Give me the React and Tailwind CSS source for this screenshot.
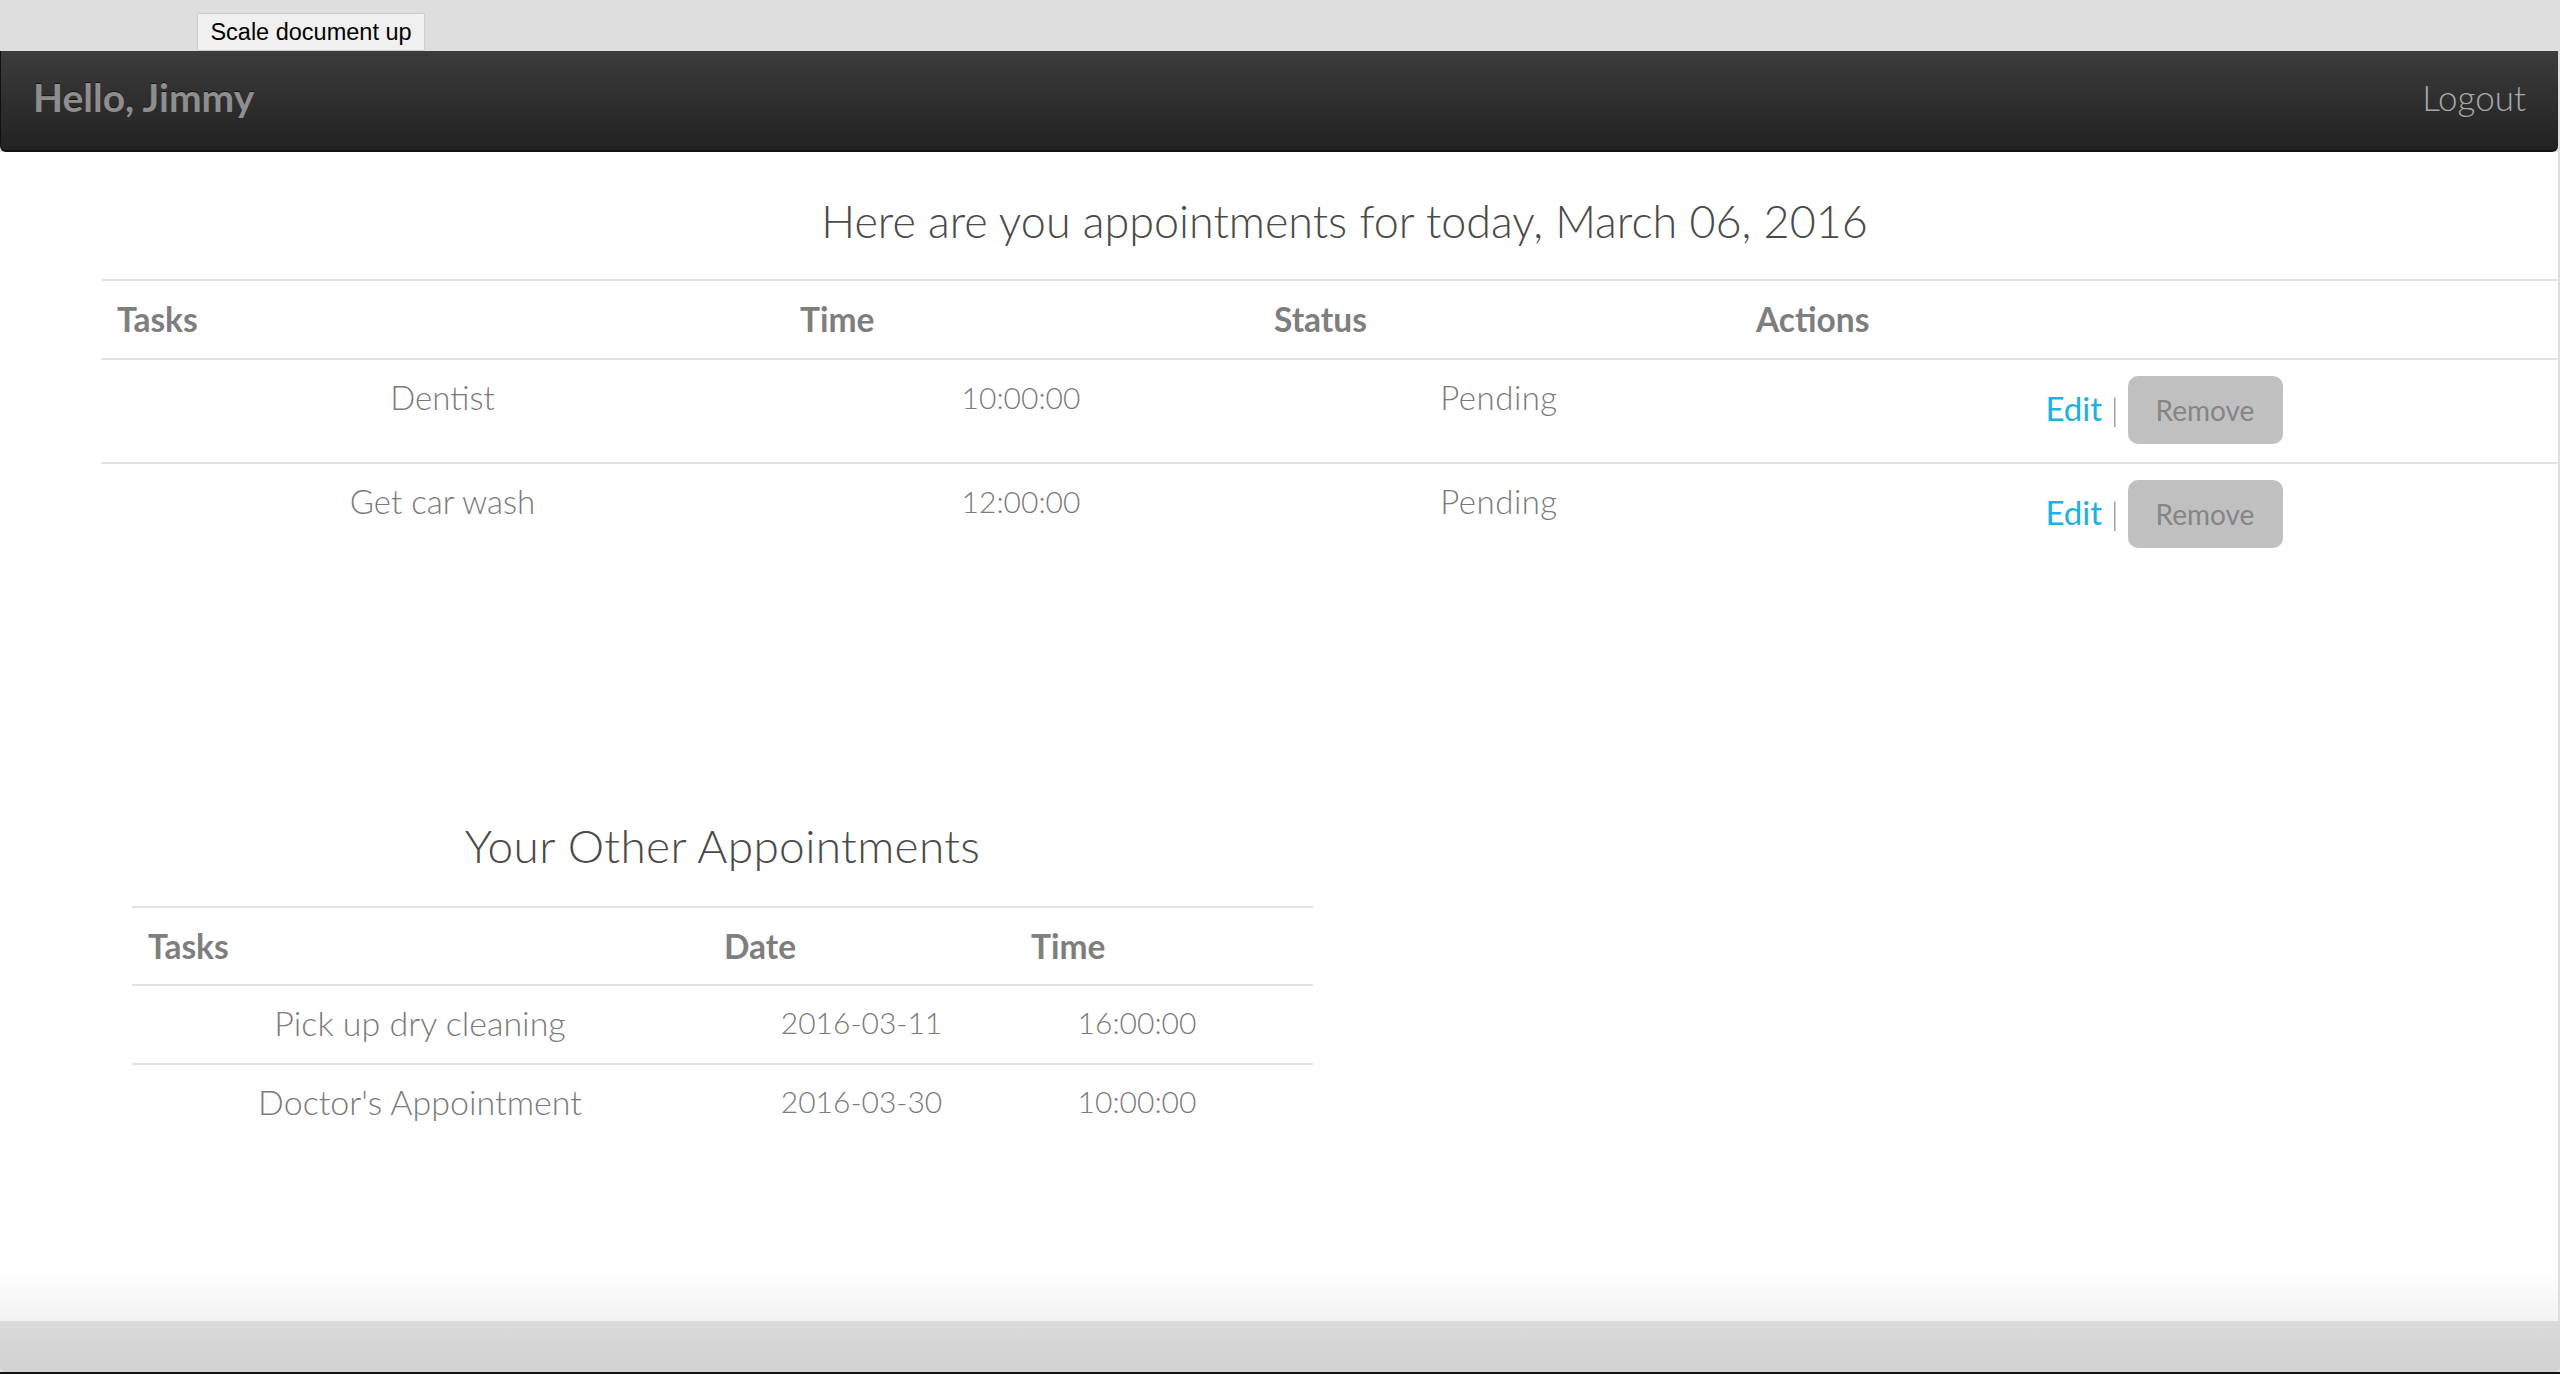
import React from "react";

const today = [
  { task: "Dentist", time: "10:00:00", status: "Pending" },
  { task: "Get car wash", time: "12:00:00", status: "Pending" },
];

const other = [
  { task: "Pick up dry cleaning", date: "2016-03-11", time: "16:00:00" },
  { task: "Doctor's Appointment", date: "2016-03-30", time: "10:00:00" },
];

function App() {
  return (
    <div className="w-[2560px] h-[1374px] overflow-hidden bg-[#dedede] flex flex-col font-['Lato',sans-serif]">
      {/* Browser tooltip strip */}
      <div className="h-[51px] shrink-0 pl-[198px] pt-[14px]">
        <div className="w-[226px] h-[36px] bg-[#f0f0f0] shadow-[0_0_2px_rgba(0,0,0,0.25)] flex items-center justify-center pt-[2px] text-[23.5px] text-black font-['Liberation_Sans',Arial,sans-serif]">
          Scale document up
        </div>
      </div>

      {/* Navbar */}
      <nav className="h-[101px] shrink-0 mr-[2px] rounded-b-[6px] border-b-2 border-l border-[#111] bg-gradient-to-b from-[#3c3c3c] to-[#222222] flex items-center justify-between pl-[32px] pr-[32px] pb-[7px]">
        <span className="text-[39px] font-bold text-[#8e8e8e] [text-shadow:0_-1px_0_rgba(0,0,0,0.6)]">
          Hello, Jimmy
        </span>
        <span className="text-[35px] font-light text-[#a8a8a8]">Logout</span>
      </nav>

      {/* Page */}
      <main className="flex-1 mr-[2px] bg-white overflow-hidden flex flex-col">
        <h1 className="ml-[101px] w-[2487px] shrink-0 mt-[42px] text-center text-[44.9px] leading-[54px] font-light text-[#4a4a4a]">
          Here are you appointments for today, March 06, 2016
        </h1>

        {/* Today's table */}
        <div className="ml-[101px] w-[2487px] shrink-0 mt-[31px] border-t-2 border-[#e2e2e2]">
          <div className="flex h-[79px] items-center border-b-2 border-[#e2e2e2] text-[33.5px] font-bold text-[#7e7e7e]">
            <div className="w-[683px] pl-[16px]">Tasks</div>
            <div className="w-[474px] pl-[16px]">Time</div>
            <div className="w-[482px] pl-[16px]">Status</div>
            <div className="flex-1 pl-[16px]">Actions</div>
          </div>
          {today.map((row, i) => (
            <div
              key={row.task}
              className={`flex h-[104px] pt-[16px] text-[33px] leading-[37px] font-light text-[#7a7a7a] ${
                i === 0 ? "border-b-2 border-[#e2e2e2]" : ""
              }`}
            >
              <div className="w-[683px] pt-[3px] text-center">{row.task}</div>
              <div className="w-[474px] pt-[3px] text-center text-[30px]">{row.time}</div>
              <div className="w-[482px] pt-[3px] text-center tracking-[0.5px]">{row.status}</div>
              <div className="flex-1 flex items-baseline justify-center">
                <a className="text-[#1ab2e4] font-normal text-[33px]">Edit</a>
                <span className="ml-[9px] text-[#8a8a8a] text-[31px]">|</span>
                <button className="ml-[9px] w-[155px] h-[68px] rounded-[10px] bg-[#c0c0c0] text-[28px] font-normal text-[#858585] flex items-center justify-center pt-[1px]">
                  Remove
                </button>
              </div>
            </div>
          ))}
        </div>

        {/* Other appointments */}
        <div className="ml-[132px] w-[1181px] shrink-0 mt-[252px]">
          <h2 className="text-center text-[46px] leading-[52px] tracking-[0.35px] font-light text-[#4a4a4a]">
            Your Other Appointments
          </h2>
          <div className="mt-[34px] border-t-2 border-[#e2e2e2]">
            <div className="flex h-[78px] items-center border-b-2 border-[#e2e2e2] text-[33.5px] font-bold text-[#7e7e7e]">
              <div className="w-[576px] pl-[16px]">Tasks</div>
              <div className="w-[307px] pl-[16px]">Date</div>
              <div className="w-[244px] pl-[16px]">Time</div>
            </div>
            {other.map((row, i) => (
              <div
                key={row.task}
                className={`flex h-[79px] pt-[18px] text-[34px] leading-[37px] font-light text-[#7a7a7a] ${
                  i === 0 ? "border-b-2 border-[#e2e2e2]" : ""
                }`}
              >
                <div className="w-[576px] text-center">{row.task}</div>
                <div className="w-[307px] text-center text-[30px]">{row.date}</div>
                <div className="w-[244px] text-center text-[30px]">{row.time}</div>
              </div>
            ))}
          </div>
        </div>

        <div className="flex-1" />
        <div className="h-[52px] shrink-0 bg-gradient-to-b from-white to-[#f2f2f2]" />
      </main>

      {/* Window bottom */}
      <div className="h-[51px] shrink-0 rounded-b-[6px] bg-gradient-to-b from-[#dadada] to-[#d1d1d1]" />
      <div className="h-[2px] shrink-0 bg-[#111]" />
    </div>
  );
}

export default App;
